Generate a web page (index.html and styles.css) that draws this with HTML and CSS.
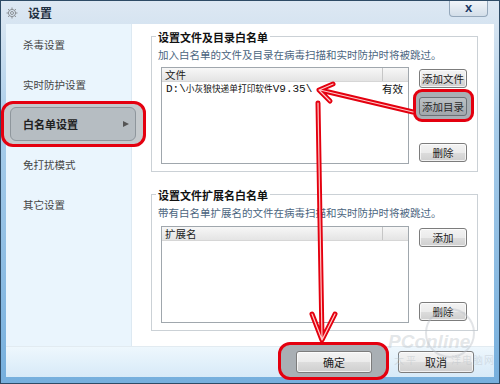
FILE: index.html
```html
<!DOCTYPE html>
<html lang="zh-CN">
<head>
    <meta charset="UTF-8">
    <title>设置</title>
    <link rel="stylesheet" href="styles.css">
</head>
<body>
    <div class="window">
        <div class="titlebar">
            <svg class="gear" width="12" height="12" viewBox="0 0 12 12">
                <g fill="none" stroke="#8a8f94" stroke-width="1">
                    <circle cx="6" cy="6" r="3.6"/>
                    <circle cx="6" cy="6" r="1.5"/>
                    <path d="M6 0.5v1.8M6 9.7v1.8M0.5 6h1.8M9.7 6h1.8M2.1 2.1l1.3 1.3M8.6 8.6l1.3 1.3M2.1 9.9l1.3-1.3M8.6 3.4l1.3-1.3"/>
                </g>
            </svg>
            <span class="title">设置</span>
            <div class="close">x</div>
        </div>

        <div class="body">
            <ul class="nav">
                <li class="nav-item"><span class="nav-label">杀毒设置</span></li>
                <li class="nav-item"><span class="nav-label">实时防护设置</span></li>
                <li class="nav-item">
                    <span class="mark mark-nav">
                        <span class="nav-label active">白名单设置<i class="caret"></i></span>
                    </span>
                </li>
                <li class="nav-item"><span class="nav-label">免打扰模式</span></li>
                <li class="nav-item"><span class="nav-label">其它设置</span></li>
            </ul>

            <div class="main">
                <div class="group">
                    <div class="group-title">设置文件及目录白名单</div>
                    <div class="group-desc">加入白名单的文件及目录在病毒扫描和实时防护时将被跳过。</div>
                    <div class="group-row">
                        <div class="list">
                            <div class="list-head"><span>文件</span><span></span></div>
                            <div class="list-row">
                                <span class="path">D:\<span class="cn">小灰狼快递单打印软件</span>V9.35\</span>
                                <span>有效</span>
                            </div>
                        </div>
                        <div class="actions">
                            <div class="btn">添加文件</div>
                            <div class="mark mark-btn"><div class="btn hot">添加目录</div></div>
                            <div class="btn push">删除</div>
                        </div>
                    </div>
                </div>

                <div class="group second">
                    <div class="group-title">设置文件扩展名白名单</div>
                    <div class="group-desc">带有白名单扩展名的文件在病毒扫描和实时防护时将被跳过。</div>
                    <div class="group-row">
                        <div class="list">
                            <div class="list-head"><span>扩展名</span><span></span></div>
                        </div>
                        <div class="actions">
                            <div class="btn">添加</div>
                            <div class="btn push">删除</div>
                        </div>
                    </div>
                </div>
            </div>
        </div>

        <div class="footer">
            <div class="mark mark-ok"><div class="btn wide">确定</div></div>
            <div class="btn wide">取消</div>
        </div>

        <!-- annotation arrows and watermark drawn over the dialog -->
        <svg class="notes" width="500" height="384" viewBox="0 0 500 384">
            <g fill="none" stroke="rgba(190,196,202,0.45)">
                <circle cx="450" cy="333" r="24" stroke-width="2"/>
            </g>
            <text x="388" y="348" class="wm-big">PConline</text>
            <text x="394 406" y="364" class="wm-small">太平</text>
            <text x="451 462 473 484" y="364" class="wm-small">洋电脑网</text>
            <g fill="none" stroke="#e4000f" stroke-width="5" stroke-linecap="round" stroke-linejoin="round">
                <path d="M413 112 L320 90 M333 84 L319 90 L330 101"/>
                <path d="M318 103 L322 339 M312 314 L322 340 L335 314"/>
            </g>
            <g fill="none" stroke="#ffc8c8" stroke-width="1.2" stroke-linecap="round" stroke-linejoin="round">
                <path d="M413 112 L320 90 M333 84 L319 90 L330 101"/>
                <path d="M318 103 L322 339 M312 314 L322 340 L335 314"/>
            </g>
        </svg>
    </div>
</body>
</html>
```

FILE: styles.css
```css
* {
    box-sizing: border-box;
}
body {
    margin: 0;
    font-family: "Noto Sans CJK SC", "Liberation Sans", sans-serif;
    color: #333;
}
.window {
    position: relative;
    width: 500px;
    height: 384px;
    border: 1px solid #2e4b66;
    padding: 0 5px 6px 5px;
    display: flex;
    flex-direction: column;
    background: linear-gradient(#dde8f3 0, #d6e4f1 24px, #a9cdea 120px, #76afdd 100%);
}
.titlebar {
    height: 23px;
    display: flex;
    align-items: center;
}
.gear {
    margin-right: 10px;
}
.title {
    font-size: 12px;
    line-height: 14px;
    font-weight: bold;
    color: #1e2e40;
}
.close {
    margin-left: auto;
    margin-right: 6px;
    align-self: flex-start;
    width: 39px;
    height: 16px;
    border: 1px solid #95a8bb;
    border-top: none;
    border-radius: 0 0 4px 4px;
    background: linear-gradient(#f1f5f9, #d3dee9);
    font-family: "Liberation Sans", sans-serif;
    font-size: 13px;
    font-weight: bold;
    line-height: 13px;
    text-align: center;
    color: #1b3a66;
}
.body {
    height: 322px;
    display: flex;
}
.nav {
    width: 126px;
    margin: 0;
    padding: 0;
    list-style: none;
    background: #eaf5fd;
    border-right: 1px solid #dde9f2;
}
.nav-item {
    display: block;
    height: 40px;
    padding: 3px 0;
}
.nav-label {
    display: flex;
    align-items: center;
    height: 34px;
    padding-left: 17px;
    font-size: 10.5px;
    color: #444;
}
.nav-label.active {
    justify-content: space-between;
    padding-left: 12px;
    padding-right: 6px;
    background: #b6bdc2;
    border: 1px solid #8e969c;
    border-radius: 6px;
    font-size: 11px;
    font-weight: bold;
    color: #222;
}
.caret {
    width: 0;
    height: 0;
    border-left: 6px solid #555;
    border-top: 3.5px solid transparent;
    border-bottom: 3.5px solid transparent;
}
.mark {
    position: relative;
    display: block;
    border: 3px solid #e4000f;
    background: #a9afb4;
}
.mark-nav {
    margin: -6px -15px -6px -5px;
    padding: 3px 7px 3px 6px;
    border-radius: 12px;
    background: #c5cacd;
}
.mark-btn {
    margin: -8px -7px -6px -6px;
    padding: 5px 4px 3px 3px;
    border-radius: 9px;
}
.mark-ok {
    margin: -9px -17px -7px -18px;
    padding: 6px 14px 4px 15px;
    border-radius: 12px;
}
.main {
    flex: 1;
    background: #fff;
    padding: 12px 16px 0 19px;
}
.group {
    border: 1px solid #cbd1d6;
    padding: 0 10px 7px 9px;
}
.group.second {
    margin-top: 22px;
}
.group-title {
    width: fit-content;
    margin: -7px 0 0 -5px;
    padding: 0 2px;
    background: #fff;
    font-size: 11px;
    line-height: 14px;
    font-weight: bold;
    color: #111;
}
.group-desc {
    margin: 4px 0 0 -3px;
    font-size: 10.5px;
    line-height: 14px;
    color: #4b6580;
}
.group-row {
    display: flex;
    margin-top: 5px;
}
.second .group-row {
    margin-top: 6px;
}
.list {
    width: 248px;
    height: 97px;
    border: 1px solid #a0a7ad;
    background: #fff;
}
.list-head,
.list-row {
    display: grid;
    grid-template-columns: 1fr 26px;
}
.list-head {
    height: 14px;
    background: linear-gradient(#f7f7f7, #e4e4e4);
    border-bottom: 1px solid #d6d6d6;
    font-size: 10.5px;
    line-height: 13px;
    color: #222;
}
.list-head span {
    padding-left: 3px;
}
.list-head span + span {
    border-left: 1px solid #c6c6c6;
}
.list-row {
    height: 14px;
    font-size: 10.5px;
    line-height: 14px;
    color: #111;
}
.path {
    padding-left: 4px;
    font-family: "Liberation Mono", "Noto Sans CJK SC", monospace;
    font-size: 11px;
    white-space: nowrap;
}
.path .cn {
    font-family: "Noto Sans CJK SC", sans-serif;
    font-size: 8.7px;
}
.actions {
    width: 48px;
    margin-left: 10px;
    padding: 2px 0;
    display: flex;
    flex-direction: column;
    gap: 9px;
}
.btn {
    height: 19px;
    border: 1px solid #7c7c7c;
    border-radius: 3px;
    background: linear-gradient(#f3f3f3 0, #ebebeb 50%, #dddddd 50%, #cfcfcf 100%);
    box-shadow: inset 0 0 0 1px rgba(255, 255, 255, 0.7);
    font-size: 10.5px;
    line-height: 17px;
    text-align: center;
    color: #222;
    white-space: nowrap;
}
.btn.hot {
    background: linear-gradient(#bcc1c5, #a1a7ab);
    border-color: #6b7176;
    box-shadow: none;
    color: #2a2a2a;
}
.btn.push {
    margin-top: auto;
}
.btn.wide {
    width: 76px;
    height: 22px;
    line-height: 20px;
    font-size: 11px;
}
.footer {
    height: 31px;
    display: flex;
    align-items: center;
    justify-content: flex-end;
    gap: 26px;
    padding-right: 20px;
    background: linear-gradient(#eef7fd, #d7eaf8);
    border-top: 1px solid #e2ebf1;
}
.notes {
    position: absolute;
    top: -1px;
    left: -1px;
    pointer-events: none;
}
.wm-big {
    font-family: "Liberation Sans", sans-serif;
    font-size: 19px;
    font-weight: bold;
    font-style: italic;
    fill: rgba(185, 192, 198, 0.4);
}
.wm-small {
    font-family: "Noto Sans CJK SC", sans-serif;
    font-size: 10px;
    fill: rgba(185, 192, 198, 0.45);
}
```
